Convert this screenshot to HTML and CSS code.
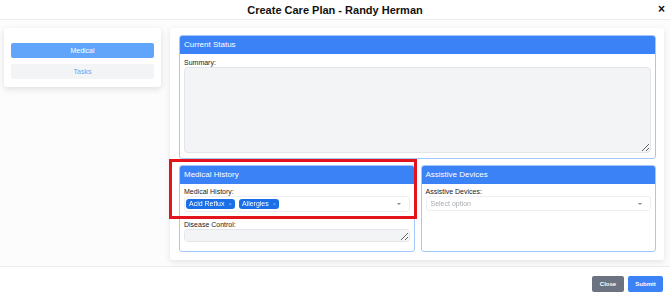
FILE: index.html
```html
<!DOCTYPE html>
<html lang="en">
  <head>
    <meta charset="UTF-8" />
    <meta name="viewport" content="width=device-width, initial-scale=1.0" />
    <title>Create Care Plan</title>
    <link rel="stylesheet" href="styles.css">
  </head>
  <body>
    <div class="modal">
      <div class="modal-header">
        <h1>Create Care Plan - Randy Herman</h1>
        <span class="close-x">&times;</span>
      </div>

      <div class="modal-body">
        <div class="sidebar">
          <button class="tab active">Medical</button>
          <button class="tab">Tasks</button>
        </div>

        <div class="content">
          <div class="panel">
            <div class="panel-title">Current Status</div>
            <div class="panel-body">
              <label>Summary:</label>
              <textarea class="summary"></textarea>
            </div>
          </div>

          <div class="panel-row">
            <div class="panel highlight">
              <div class="panel-title">Medical History</div>
              <div class="panel-body">
                <label>Medical History:</label>
                <div class="select">
                  <span class="tag">Acid Reflux <i>&times;</i></span>
                  <span class="tag">Allergies <i>&times;</i></span>
                  <span class="caret"></span>
                </div>
                <label class="spaced">Disease Control:</label>
                <textarea class="small"></textarea>
              </div>
              <div class="red-box"></div>
            </div>

            <div class="panel">
              <div class="panel-title">Assistive Devices</div>
              <div class="panel-body">
                <label>Assistive Devices:</label>
                <div class="select empty">
                  <span class="placeholder">Select option</span>
                  <span class="caret"></span>
                </div>
              </div>
            </div>
          </div>
        </div>
      </div>

      <div class="modal-footer">
        <button class="btn btn-gray">Close</button>
        <button class="btn btn-blue">Submit</button>
      </div>
    </div>
  </body>
</html>
```

FILE: styles.css
```css
* {
  margin: 0;
  padding: 0;
  box-sizing: border-box;
  font-family: "Liberation Sans", Arial, sans-serif;
}

body {
  background-color: #fff;
  color: #222;
  width: 670px;
  height: 297px;
  overflow: hidden;
}

/* Header */
.modal-header {
  height: 20px;
  border-bottom: 1px solid #ececec;
  display: flex;
  align-items: center;
  justify-content: center;
  position: relative;
}

.modal-header h1 {
  font-size: 11px;
  font-weight: bold;
  color: #111;
}

.close-x {
  position: absolute;
  right: 5px;
  top: 2px;
  font-size: 12px;
  font-weight: bold;
  color: #111;
}

/* Body */
.modal-body {
  display: flex;
  align-items: flex-start;
  gap: 9px;
  padding: 8px 6px 0 4px;
  height: 247px;
  border-bottom: 1px solid #ececec;
  background: #fcfcfc;
}

.sidebar {
  width: 157px;
  background: #fff;
  padding: 15px 7px 8px;
  border-radius: 3px;
  box-shadow: 0 2px 6px rgba(0, 0, 0, 0.12);
  display: flex;
  flex-direction: column;
  gap: 6px;
}

.tab {
  height: 15px;
  border: none;
  border-radius: 2px;
  background: #f3f4f6;
  color: #60a5fa;
  font-size: 7px;
}

.tab.active {
  background: #60a5fa;
  color: #fff;
}

.content {
  flex: 1;
  height: 232px;
  background: #fff;
  padding: 7px 8px 8px 9px;
  border-radius: 3px;
  box-shadow: 0 2px 6px rgba(0, 0, 0, 0.1);
  display: flex;
  flex-direction: column;
  gap: 6px;
}

/* Panels */
.panel {
  border: 1px solid #a5c8fb;
  border-radius: 3px;
  background: #fff;
  display: flex;
  flex-direction: column;
}

.panel-title {
  background: #3b82f6;
  color: #fff;
  font-size: 8px;
  height: 18px;
  line-height: 18px;
  padding-left: 4px;
  border-radius: 2px 2px 0 0;
}

.panel-body {
  padding: 5px 4px 5px;
  display: flex;
  flex-direction: column;
}

label {
  font-size: 7px;
  color: #222;
  margin-bottom: 1px;
}

label.spaced {
  margin-top: 9px;
}

textarea {
  background: #f3f4f6;
  border: 1px solid #e3e5e8;
  border-radius: 4px;
  resize: vertical;
}

.summary {
  height: 86px;
}

.small {
  height: 13px;
}

.panel-row {
  flex: 1;
  display: grid;
  grid-template-columns: 1fr 1fr;
  gap: 6px;
}

.panel-row .panel-body {
  padding-top: 4px;
}

.highlight {
  position: relative;
}

.red-box {
  position: absolute;
  left: -11px;
  top: -7px;
  width: 248px;
  height: 60px;
  border: 3px solid #e3141b;
}

/* Select */
.select {
  height: 16px;
  border: 1px solid #eceef1;
  border-radius: 3px;
  display: flex;
  align-items: center;
  gap: 4px;
  padding: 0 1px;
  position: relative;
}

.select.empty {
  height: 15px;
  padding-left: 4px;
}

.tag {
  background: #1a6fe6;
  color: #fff;
  font-size: 7px;
  height: 10px;
  line-height: 10px;
  padding: 0 3px;
  border-radius: 3px;
  display: flex;
  gap: 4px;
}

.tag i {
  font-style: normal;
  color: #7fb0f5;
  font-size: 6px;
}

.placeholder {
  font-size: 7px;
  color: #a8abb0;
}

.caret {
  position: absolute;
  right: 8px;
  top: 6px;
  border-left: 2px solid transparent;
  border-right: 2px solid transparent;
  border-top: 2px solid #888;
}

/* Footer */
.modal-footer {
  display: flex;
  justify-content: flex-end;
  gap: 4px;
  padding: 9px 7px 0 0;
}

.btn {
  height: 16px;
  border: none;
  border-radius: 2px;
  color: #fff;
  font-size: 6px;
  font-weight: bold;
}

.btn-gray {
  background: #6b7280;
  width: 32px;
}

.btn-blue {
  background: #3b82f6;
  width: 35px;
}
```
